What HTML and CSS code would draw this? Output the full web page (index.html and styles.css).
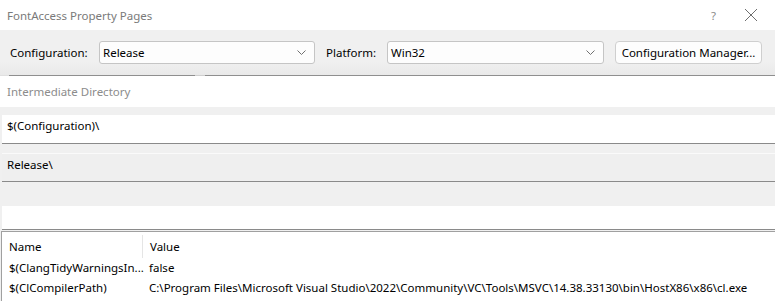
FILE: index.html
```html
<!DOCTYPE html>
<html lang="en">
<head>
    <meta charset="UTF-8">
    <meta name="viewport" content="width=device-width, initial-scale=1.0">
    <title>FontAccess Property Pages</title>
    <link rel="stylesheet" href="styles.css">
</head>
<body>
    <div class="titlebar">
        <span class="title">FontAccess Property Pages</span>
        <span class="help">?</span>
        <svg class="close" width="14" height="14" viewBox="0 0 14 14">
            <path d="M1 1 L13 13 M13 1 L1 13" stroke="#6e6e6e" stroke-width="1" fill="none"/>
        </svg>
    </div>

    <div class="toolbar">
        <label class="lbl lbl-config">Configuration:</label>
        <div class="combo combo-config">
            <span>Release</span>
            <svg class="chev" width="9" height="5" viewBox="0 0 9 5"><path d="M0.5 0.5 L4.5 4.5 L8.5 0.5" stroke="#707070" fill="none"/></svg>
        </div>
        <label class="lbl lbl-platform">Platform:</label>
        <div class="combo combo-platform">
            <span>Win32</span>
            <svg class="chev" width="9" height="5" viewBox="0 0 9 5"><path d="M0.5 0.5 L4.5 4.5 L8.5 0.5" stroke="#707070" fill="none"/></svg>
        </div>
        <button class="btn">Configuration Manager...</button>
    </div>
    <div class="splitline">
        <div class="seg seg-a"></div>
        <div class="seg seg-b"></div>
        <div class="seg seg-c"></div>
    </div>

    <div class="caption">Intermediate Directory</div>

    <div class="editor">
        <div class="field field-edit">$(Configuration)\</div>
        <div class="field field-eval">Release\</div>
        <div class="field field-blank"></div>
    </div>

    <div class="macros">
        <div class="row head">
            <div class="c-name">Name</div>
            <div class="c-value">Value</div>
        </div>
        <div class="row">
            <div class="c-name">$(ClangTidyWarningsIn...</div>
            <div class="c-value">false</div>
        </div>
        <div class="row">
            <div class="c-name">$(ClCompilerPath)</div>
            <div class="c-value">C:\Program Files\Microsoft Visual Studio\2022\Community\VC\Tools\MSVC\14.38.33130\bin\HostX86\x86\cl.exe</div>
        </div>
    </div>
</body>
</html>
```

FILE: styles.css
```css
body {
    font-family: "Noto Sans", "Open Sans", sans-serif;
    font-size: 11.5px;
    color: #000;
    margin: 0;
    padding: 0;
    background: #f0f0f0;
    width: 775px;
    height: 301px;
    overflow: hidden;
}

.titlebar {
    height: 30px;
    background: #fff;
    display: flex;
    align-items: center;
    padding-left: 7px;
}

.title {
    color: #7a7a7a;
    flex: 1;
}

.help {
    color: #8a8a8a;
    margin-right: 28px;
}

.close {
    margin-right: 17px;
}

.toolbar {
    height: 45px;
    display: flex;
    align-items: center;
    background: linear-gradient(#f0f0f0 70%, #e9e9e9);
}

.lbl {
    color: #000;
}

.lbl-config {
    margin-left: 10px;
    width: 89px;
}

.lbl-platform {
    margin-left: 11px;
    width: 61px;
}

.combo {
    background: #fdfdfd;
    border: 1px solid #c5c5c5;
    border-radius: 3px;
    display: flex;
    align-items: center;
    justify-content: space-between;
    padding: 0 8px 0 3px;
    box-sizing: border-box;
    height: 23px;
}

.combo-config {
    width: 216px;
}

.combo-platform {
    width: 217px;
}

.btn {
    margin-left: 11px;
    width: 147px;
    height: 23px;
    font: inherit;
    color: #000;
    background: #fdfdfd;
    border: 1px solid #cfcfcf;
    border-radius: 4px;
    padding: 0;
    margin-top: -1px;
}

.splitline {
    display: flex;
    height: 1px;
    background: #e0e0e0;
}

.seg-a {
    margin-left: 9px;
    width: 186px;
    background: #8f8f8f;
}

.seg-b {
    width: 10px;
    background: #cfcfcf;
}

.seg-c {
    flex: 1;
    background: #8f8f8f;
}

.caption {
    height: 31px;
    background: #fff;
    color: #8c8c8c;
    padding-left: 7px;
    line-height: 31px;
}

.editor {
    padding-top: 8px;
}

.field {
    margin-left: 2px;
    height: 27px;
    line-height: 22px;
    padding-left: 5px;
    border-bottom: 1px solid #8a8a8a;
}

.field-edit {
    height: 28px;
    background: #fff;
}

.field-eval {
    margin-top: 9px;
    background: #efefef;
    border-top: 1px solid #fafafa;
}

.field-blank {
    margin-top: 24px;
    height: 23px;
    background: #fff;
}

.macros {
    margin-top: 1px;
    margin-left: 1px;
    height: 80px;
    background: #fff;
    border-top: 1px solid #a0a0a0;
    border-left: 1px solid #a0a0a0;
    padding-top: 3px;
}

.row {
    display: flex;
    height: 20px;
    line-height: 20px;
}

.row.head {
    height: 23px;
    line-height: 23px;
}

.c-name {
    width: 133px;
    padding-left: 7px;
    white-space: nowrap;
}

.row.head .c-name {
    border-right: 1px solid #e5e5e5;
}

.c-value {
    padding-left: 7px;
    white-space: nowrap;
}
```
